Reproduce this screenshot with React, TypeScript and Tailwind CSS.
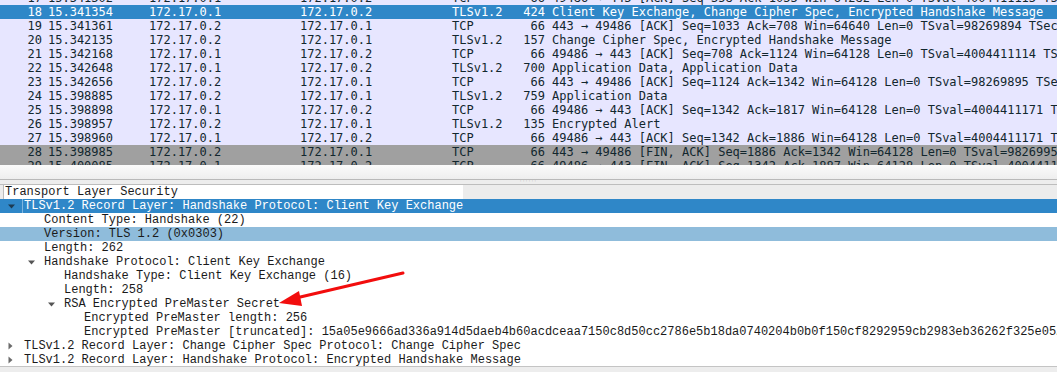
type Pkt = {
  no: number;
  time: string;
  src: string;
  dst: string;
  proto: string;
  len: number;
  info: string;
  kind: "tcp" | "sel" | "fin";
};

const A = "172.17.0.1";
const B = "172.17.0.2";

const packets: Pkt[] = [
  { no: 17, time: "15.341302", src: A, dst: B, proto: "TCP", len: 66, info: "49486 → 443 [ACK] Seq=358 Ack=1033 Win=64282 Len=0 TSval=4004411113 TSecr=98269893", kind: "tcp" },
  { no: 18, time: "15.341354", src: A, dst: B, proto: "TLSv1.2", len: 424, info: "Client Key Exchange, Change Cipher Spec, Encrypted Handshake Message", kind: "sel" },
  { no: 19, time: "15.341361", src: B, dst: A, proto: "TCP", len: 66, info: "443 → 49486 [ACK] Seq=1033 Ack=708 Win=64640 Len=0 TSval=98269894 TSecr=4004411113", kind: "tcp" },
  { no: 20, time: "15.342135", src: B, dst: A, proto: "TLSv1.2", len: 157, info: "Change Cipher Spec, Encrypted Handshake Message", kind: "tcp" },
  { no: 21, time: "15.342168", src: A, dst: B, proto: "TCP", len: 66, info: "49486 → 443 [ACK] Seq=708 Ack=1124 Win=64128 Len=0 TSval=4004411114 TSecr=98269894", kind: "tcp" },
  { no: 22, time: "15.342648", src: A, dst: B, proto: "TLSv1.2", len: 700, info: "Application Data, Application Data", kind: "tcp" },
  { no: 23, time: "15.342656", src: B, dst: A, proto: "TCP", len: 66, info: "443 → 49486 [ACK] Seq=1124 Ack=1342 Win=64128 Len=0 TSval=98269895 TSecr=4004411114", kind: "tcp" },
  { no: 24, time: "15.398885", src: B, dst: A, proto: "TLSv1.2", len: 759, info: "Application Data", kind: "tcp" },
  { no: 25, time: "15.398898", src: A, dst: B, proto: "TCP", len: 66, info: "49486 → 443 [ACK] Seq=1342 Ack=1817 Win=64128 Len=0 TSval=4004411171 TSecr=98269951", kind: "tcp" },
  { no: 26, time: "15.398957", src: B, dst: A, proto: "TLSv1.2", len: 135, info: "Encrypted Alert", kind: "tcp" },
  { no: 27, time: "15.398960", src: A, dst: B, proto: "TCP", len: 66, info: "49486 → 443 [ACK] Seq=1342 Ack=1886 Win=64128 Len=0 TSval=4004411171 TSecr=98269951", kind: "tcp" },
  { no: 28, time: "15.398985", src: B, dst: A, proto: "TCP", len: 66, info: "443 → 49486 [FIN, ACK] Seq=1886 Ack=1342 Win=64128 Len=0 TSval=98269951 TSecr=4004411171", kind: "fin" },
  { no: 29, time: "15.400085", src: A, dst: B, proto: "TCP", len: 66, info: "49486 → 443 [FIN, ACK] Seq=1342 Ack=1887 Win=64128 Len=0 TSval=4004411172 TSecr=98269951", kind: "fin" },
];

const rowBg = {
  tcp: "bg-[#e7e6ff] text-[#12272e]",
  sel: "bg-[#2f87c8] text-white",
  fin: "bg-[#a0a0a0] text-[#12272e]",
};

type Node = {
  level: number;
  exp?: "open" | "closed";
  text: string;
  hl?: "sel" | "soft";
};

const tree: Node[] = [
  { level: 0, exp: "open", text: "TLSv1.2 Record Layer: Handshake Protocol: Client Key Exchange", hl: "sel" },
  { level: 1, text: "Content Type: Handshake (22)" },
  { level: 1, text: "Version: TLS 1.2 (0x0303)", hl: "soft" },
  { level: 1, text: "Length: 262" },
  { level: 1, exp: "open", text: "Handshake Protocol: Client Key Exchange" },
  { level: 2, text: "Handshake Type: Client Key Exchange (16)" },
  { level: 2, text: "Length: 258" },
  { level: 2, exp: "open", text: "RSA Encrypted PreMaster Secret" },
  { level: 3, text: "Encrypted PreMaster length: 256" },
  {
    level: 3,
    text: "Encrypted PreMaster [truncated]: 15a05e9666ad336a914d5daeb4b60acdceaa7150c8d50cc2786e5b18da0740204b0b0f150cf8292959cb2983eb36262f325e05…",
  },
  { level: 0, exp: "closed", text: "TLSv1.2 Record Layer: Change Cipher Spec Protocol: Change Cipher Spec" },
  { level: 0, exp: "closed", text: "TLSv1.2 Record Layer: Handshake Protocol: Encrypted Handshake Message" },
];

const indent = ["pl-[8px]", "pl-[28px]", "pl-[48px]", "pl-[68px]"];

function Expander({ state, dark }: { state?: "open" | "closed"; dark?: boolean }) {
  if (!state) return <span className="w-[16px] shrink-0" />;
  return (
    <span className="w-[16px] shrink-0 flex items-center">
      {state === "open" ? (
        <svg width="8" height="5" viewBox="0 0 8 5">
          <polygon points="0,0.5 7,0.5 3.5,4.5" fill={dark ? "#1d3b52" : "#555"} />
        </svg>
      ) : (
        <svg width="5" height="8" viewBox="0 0 5 8">
          <polygon points="0.5,0.5 4.5,4 0.5,7.5" fill="#6b6b6b" />
        </svg>
      )}
    </span>
  );
}

function PacketList() {
  return (
    <div className="h-[165px] overflow-hidden bg-[#e7e6ff] font-['DejaVu_Sans_Mono',monospace] text-[12px] leading-[14px]">
      <div className="-mt-[9px]">
        {packets.map((p) => (
          <div key={p.no} className={`flex h-[14px] whitespace-nowrap ${rowBg[p.kind]}`}>
            <span className="w-[42px] shrink-0 text-right">{p.no}</span>
            <span className="w-[107px] shrink-0 pl-[6px]">{p.time}</span>
            <span className="w-[151px] shrink-0">{p.src}</span>
            <span className="w-[152px] shrink-0">{p.dst}</span>
            <span className="w-[66px] shrink-0">{p.proto}</span>
            <span className="w-[27px] shrink-0 text-right">{p.len}</span>
            <span className="pl-[7px]">{p.info}</span>
          </div>
        ))}
      </div>
    </div>
  );
}

function Splitter() {
  return (
    <div className="flex flex-col">
      <div className="h-[14px] bg-gradient-to-b from-[#fbfbfb] to-[#eeeeee]" />
      <div className="h-[1px] bg-[#b9b9b9]" />
      <div className="h-[4px] bg-[#ededed] flex justify-center items-center">
        <span className="text-[#b0b0b0] text-[6px] leading-[4px] tracking-[1px] -mt-[2px] font-['DejaVu_Sans',sans-serif]">
          ······
        </span>
      </div>
      <div className="h-[1px] bg-[#bdbdbd]" />
    </div>
  );
}

function Details() {
  return (
    <div className="relative h-[184px] bg-white font-['Liberation_Mono',monospace] text-[12px] leading-[14px] text-[#1a1a1a] overflow-hidden">
      <div className="h-[14px] bg-[#ececec] flex">
        <div className="w-[460px] bg-white border-l border-[#bcbcbc] ml-[3px] pl-[1px] whitespace-nowrap">
          Transport Layer Security
        </div>
      </div>
      {tree.map((n, i) => (
        <div
          key={i}
          className={`flex items-center h-[14px] whitespace-nowrap ${indent[n.level]} ${
            n.hl === "sel"
              ? "bg-[#2f87c8] text-white"
              : n.hl === "soft"
              ? "bg-[#8fbcdb]"
              : ""
          }`}
        >
          <Expander state={n.exp} dark={n.hl === "sel"} />
          <span className={n.hl === "sel" ? "border-l border-[#7fb6e0] pl-[1px] -ml-[2px]" : ""}>{n.text}</span>
        </div>
      ))}
      <div className="absolute left-0 right-0 bottom-0 h-[3px] bg-[#ededed] border-t border-[#c4c4c4]" />
      <svg className="absolute left-0 top-0 pointer-events-none" width="1057" height="184" viewBox="0 0 1057 184">
        <line x1="403" y1="88" x2="296" y2="113" stroke="#f20d0d" strokeWidth="3" strokeLinecap="round" />
        <polygon points="279,118 299,106 302,121" fill="#f20d0d" />
      </svg>
    </div>
  );
}

export default function App() {
  return (
    <div className="w-[1057px] h-[372px] overflow-hidden bg-[#ededed] flex flex-col">
      <PacketList />
      <Splitter />
      <Details />
    </div>
  );
}
